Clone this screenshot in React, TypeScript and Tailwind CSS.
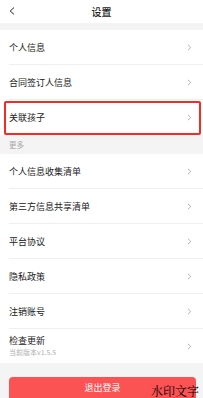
import { ReactNode } from 'react';

const font = { fontFamily: '"Noto Sans CJK SC", "Noto Sans", sans-serif' };

function Chevron() {
  return (
    <svg className="w-[5px] h-[7px] text-[#aaaaaa]" viewBox="0 0 5 7" fill="none">
      <path d="M1 0.8 L3.8 3.5 L1 6.2" stroke="currentColor" strokeWidth="0.9" />
    </svg>
  );
}

function Row({ children, last = false }: { children: ReactNode; last?: boolean }) {
  return (
    <div className="pl-[9px]">
      <div
        className={`flex items-center justify-between h-[35px] pr-[11px] ${
          last ? '' : 'border-b border-[#efefef]'
        }`}
      >
        <div className="text-[9px] leading-none text-[#222222]">{children}</div>
        <Chevron />
      </div>
    </div>
  );
}

export default function App() {
  return (
    <div className="relative w-[203px] h-[398px] overflow-hidden bg-[#f4f4f4]" style={font}>
      {/* header */}
      <div className="relative flex items-center justify-center h-[23px] bg-white">
        <svg className="absolute left-[9px] top-[7px] w-[6px] h-[8px]" viewBox="0 0 6 8" fill="none">
          <path d="M5 0.6 L1.2 4 L5 7.4" stroke="#222222" strokeWidth="1" />
        </svg>
        <span className="text-[10px] font-medium text-[#222222]">设置</span>
      </div>

      <div className="h-[7px]" />

      <div className="bg-white">
        <Row>个人信息</Row>
        <Row>合同签订人信息</Row>
        <div className="relative">
          <Row last>关联孩子</Row>
          <div className="absolute left-[4px] right-[2px] top-[1px] bottom-0 border-2 border-[#f52a22] rounded-[2px]" />
        </div>
      </div>

      <div className="flex items-center h-[19px] pl-[9px] text-[7.5px] text-[#a8a8a8]">更多</div>

      <div className="bg-white">
        <Row>个人信息收集清单</Row>
        <Row>第三方信息共享清单</Row>
        <Row>平台协议</Row>
        <Row>隐私政策</Row>
        <Row>注销账号</Row>
        <div className="pl-[9px]">
          <div className="flex items-center justify-between h-[34px] pr-[11px]">
            <div className="flex flex-col gap-[4px]">
              <span className="text-[9px] leading-none text-[#222222]">检查更新</span>
              <span className="text-[7px] leading-none text-[#b0b0b0]">当前版本v1.5.5</span>
            </div>
            <Chevron />
          </div>
        </div>
      </div>

      <div className="px-[9px] pt-[14px] pr-[7px]">
        <div className="flex items-center justify-center h-[28px] rounded-[4px] bg-[#fb5254] text-white text-[9px]">
          <span className="-mt-[6px]">退出登录</span>
        </div>
      </div>

      <div
        className="absolute right-[4px] bottom-[1px] text-[12px] leading-none text-black"
        style={{ fontFamily: '"Noto Serif CJK SC", "Noto Sans CJK SC", serif' }}
      >
        水印文字
      </div>
    </div>
  );
}
